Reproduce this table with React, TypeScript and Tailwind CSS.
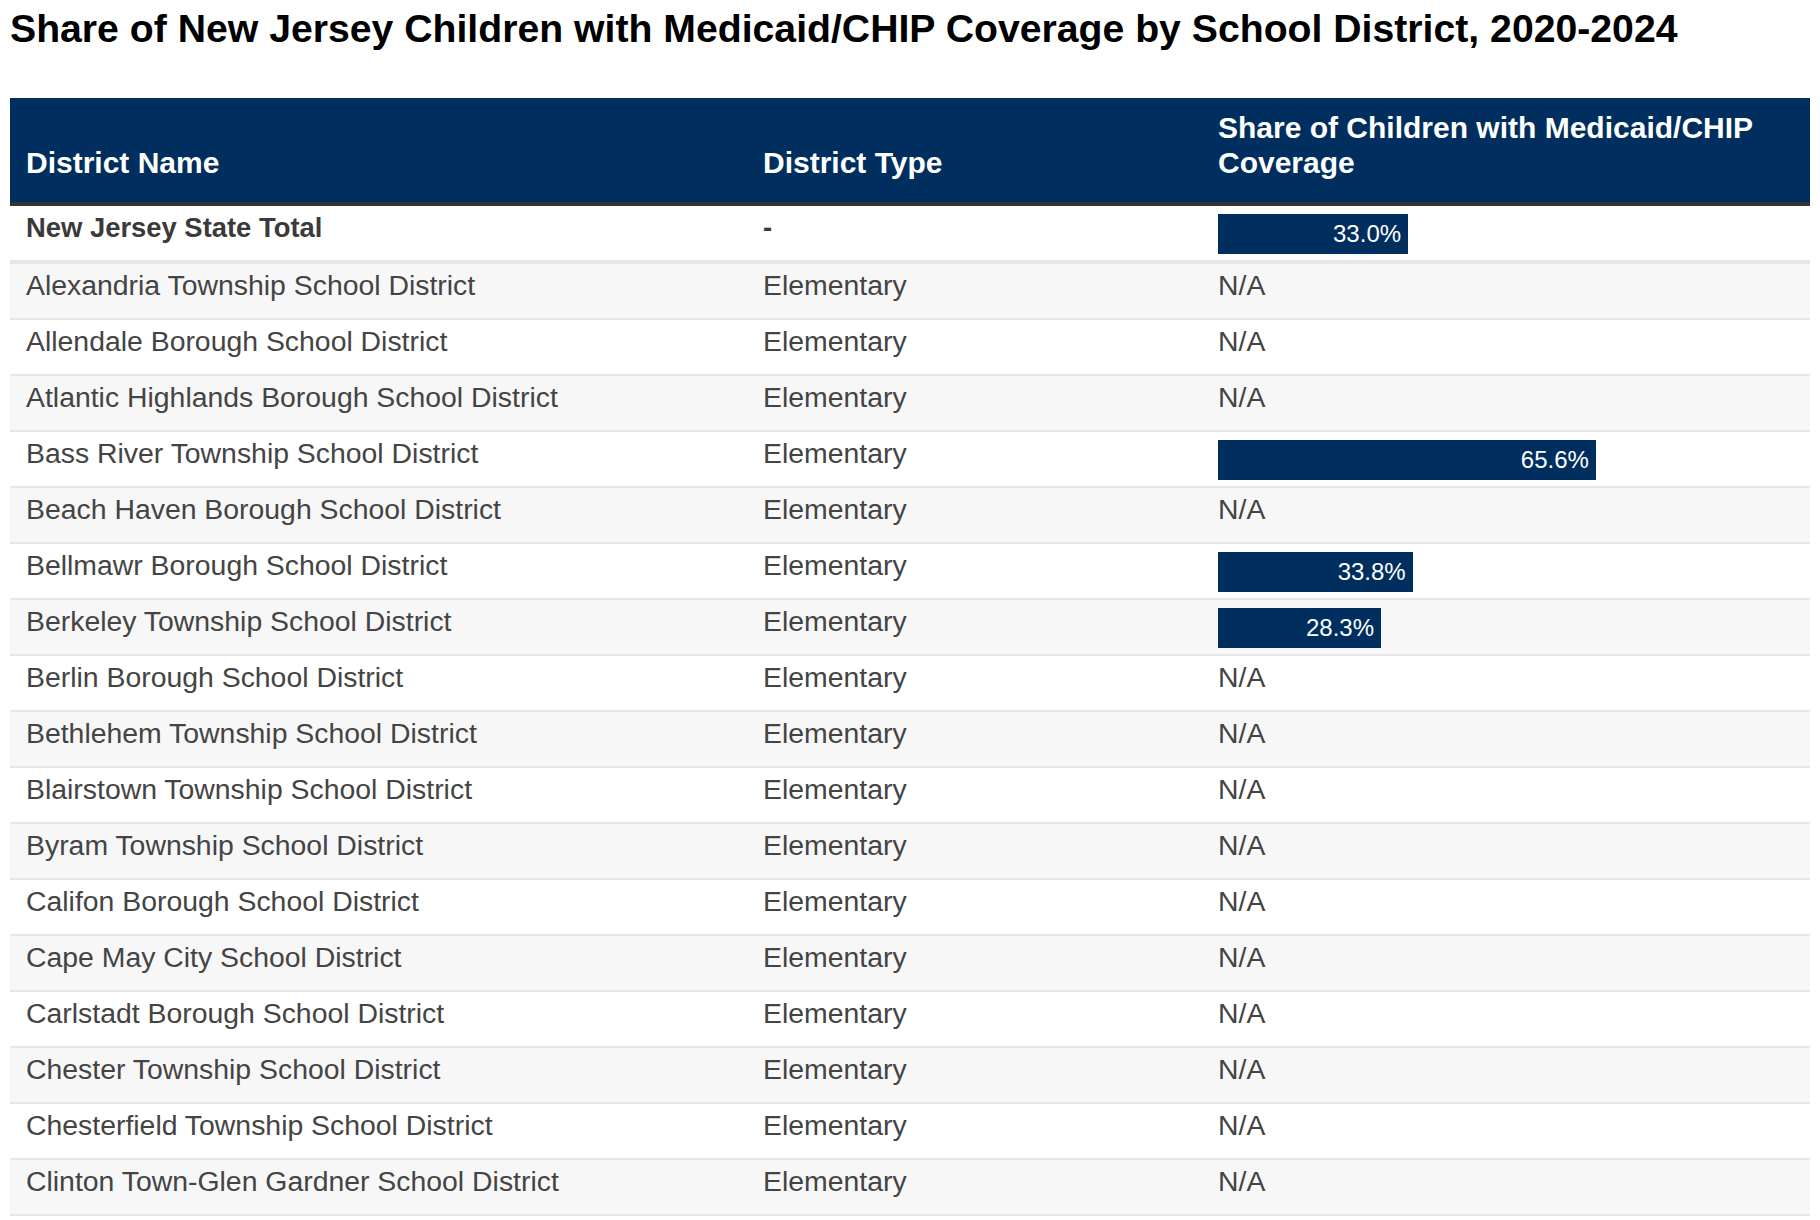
import React from "react";

type Row = {
  name: string;
  type: string;
  share: number | null;
};

const rows: Row[] = [
  { name: "Alexandria Township School District", type: "Elementary", share: null },
  { name: "Allendale Borough School District", type: "Elementary", share: null },
  { name: "Atlantic Highlands Borough School District", type: "Elementary", share: null },
  { name: "Bass River Township School District", type: "Elementary", share: 65.6 },
  { name: "Beach Haven Borough School District", type: "Elementary", share: null },
  { name: "Bellmawr Borough School District", type: "Elementary", share: 33.8 },
  { name: "Berkeley Township School District", type: "Elementary", share: 28.3 },
  { name: "Berlin Borough School District", type: "Elementary", share: null },
  { name: "Bethlehem Township School District", type: "Elementary", share: null },
  { name: "Blairstown Township School District", type: "Elementary", share: null },
  { name: "Byram Township School District", type: "Elementary", share: null },
  { name: "Califon Borough School District", type: "Elementary", share: null },
  { name: "Cape May City School District", type: "Elementary", share: null },
  { name: "Carlstadt Borough School District", type: "Elementary", share: null },
  { name: "Chester Township School District", type: "Elementary", share: null },
  { name: "Chesterfield Township School District", type: "Elementary", share: null },
  { name: "Clinton Town-Glen Gardner School District", type: "Elementary", share: null },
];

// bar takes a share of the cell's inner width (576px == 100%)
const Bar = ({ value }: { value: number }) => (
  <div
    className="mt-2 h-10 bg-[#002f5f] flex items-center justify-end pr-[7px] text-white text-[24px]"
    style={{ width: `${value}%` }}
  >
    {value.toFixed(1)}%
  </div>
);

const ShareCell = ({ value }: { value: number | null }) => (
  <div className="px-4">
    {value === null ? (
      <div className="pt-[6px] leading-[31px]">N/A</div>
    ) : (
      <Bar value={value} />
    )}
  </div>
);

export default function App() {
  return (
    <div
      className="min-h-screen bg-white px-[10px] pt-[6px]"
      style={{ fontFamily: '"Liberation Sans", Arial, Helvetica, sans-serif' }}
    >
      <h1 className="text-[39.2px] font-bold text-black leading-[45px]">
        Share of New Jersey Children with Medicaid/CHIP Coverage by School District, 2020-2024
      </h1>

      <div className="mt-[47px] w-[1800px]">
        {/* header */}
        <div className="grid grid-cols-[737px_455px_608px] h-[108px] bg-[#002f5f] border-b-4 border-[#333333] text-white text-[30px] font-bold leading-[35px]">
          <div className="px-4 pb-[22px] flex items-end">District Name</div>
          <div className="px-4 pb-[22px] flex items-end">District Type</div>
          <div className="px-4 pb-[22px] flex items-end">
            Share of Children with Medicaid/CHIP Coverage
          </div>
        </div>

        {/* state total */}
        <div className="grid grid-cols-[737px_455px_608px] h-[58px] bg-white border-b-4 border-[#e6e6e6] text-[#3a3a3a]">
          <div className="px-4 pt-[6px] leading-[31px] text-[27.4px] font-bold">New Jersey State Total</div>
          <div className="px-4 pt-[6px] leading-[31px] text-[27.4px] font-bold">-</div>
          <div className="text-[28.4px]">
            <ShareCell value={33.0} />
          </div>
        </div>

        {rows.map((r, i) => (
          <div
            key={r.name}
            className={`grid grid-cols-[737px_455px_608px] h-[56px] border-b-2 border-[#e6e6e6] text-[28.4px] text-[#444444] ${
              i % 2 === 0 ? "bg-[#f7f7f7]" : "bg-white"
            }`}
          >
            <div className="px-4 pt-[6px] leading-[31px] whitespace-nowrap">{r.name}</div>
            <div className="px-4 pt-[6px] leading-[31px]">{r.type}</div>
            <ShareCell value={r.share} />
          </div>
        ))}
      </div>
    </div>
  );
}
